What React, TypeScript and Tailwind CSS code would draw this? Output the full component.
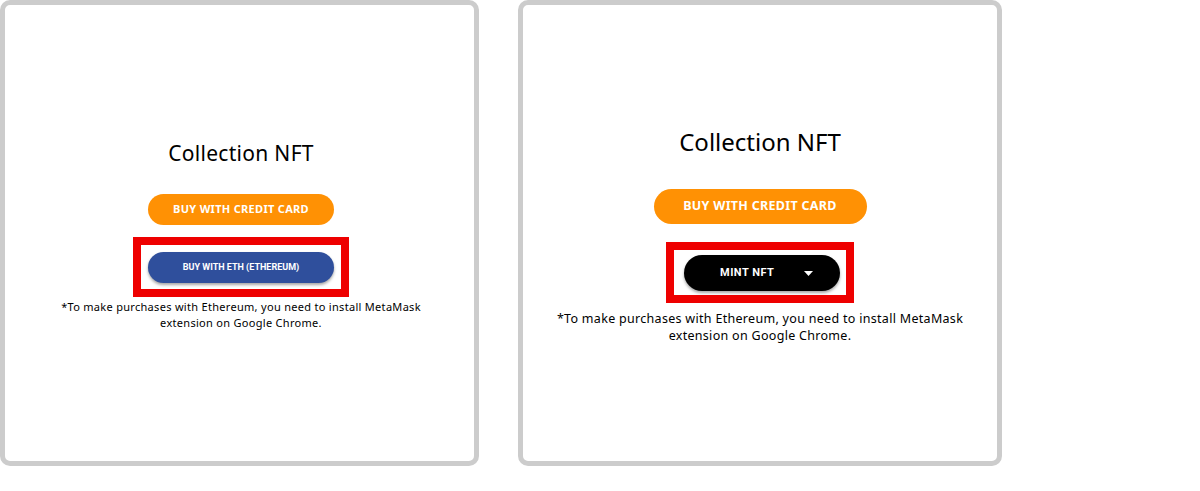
import React from 'react';

const sans = { fontFamily: '"Noto Sans", "Open Sans", sans-serif' };

function Footnote({ size }: { size: 'sm' | 'lg' }) {
  return (
    <p
      style={sans}
      className={
        size === 'sm'
          ? 'text-[11px] leading-[16px] tracking-[0.3px] text-black text-center'
          : 'text-[12.5px] leading-[17px] tracking-[0.3px] text-black text-center'
      }
    >
      *To make purchases with Ethereum, you need to install MetaMask
      <br />
      extension on Google Chrome.
    </p>
  );
}

export default function App() {
  return (
    <div className="w-[1200px] h-[491px] bg-white flex gap-[39px] items-start">
      {/* Left card: ETH button variant */}
      <div className="w-[479px] h-[466px] border-[5px] border-[#cccccc] rounded-[10px] flex flex-col items-center pt-[133px] pl-[3px]">
        <h2 style={sans} className="text-[21px] leading-[30px] tracking-[0.3px] text-black">
          Collection NFT
        </h2>
        <button
          style={sans}
          className="mt-[26px] w-[186px] h-[31px] rounded-full bg-[#ff9104] text-white text-[11px] font-bold tracking-[0.3px] flex items-center justify-center"
        >
          BUY WITH CREDIT CARD
        </button>
        <div className="mt-[12px] border-[8px] border-[#ee0000] pt-[7px] pb-[6px] px-[7px]">
          <button
            style={{ fontFamily: 'Roboto, sans-serif' }}
            className="w-[186px] h-[31px] rounded-full bg-[#2f4f9c] text-white text-[9px] font-bold flex items-center justify-center shadow-[0_2px_3px_rgba(0,0,0,0.35)]"
          >
            BUY WITH ETH (ETHEREUM)
          </button>
        </div>
        <div className="mt-[2px]">
          <Footnote size="sm" />
        </div>
      </div>

      {/* Right card: Mint NFT variant */}
      <div className="w-[484px] h-[466px] border-[5px] border-[#cccccc] rounded-[10px] flex flex-col items-center pt-[121px]">
        <h2 style={sans} className="text-[24px] leading-[32px] text-black">
          Collection NFT
        </h2>
        <button
          style={sans}
          className="mt-[31px] w-[213px] h-[35px] rounded-full bg-[#ff9104] text-white text-[12.5px] font-bold tracking-[0.3px] flex items-center justify-center"
        >
          BUY WITH CREDIT CARD
        </button>
        <div className="mt-[18px] border-[8px] border-[#ee0000] pt-[5px] pb-[4px] pl-[10px] pr-[6px]">
          <button
            style={{ fontFamily: 'Roboto, sans-serif' }}
            className="w-[156px] h-[36px] rounded-full bg-black text-white text-[11px] font-bold tracking-[0.5px] flex items-center pl-[36px] gap-[30px] shadow-[0_2px_3px_rgba(0,0,0,0.35)]"
          >
            <span>MINT NFT</span>
            <svg width="9" height="5" viewBox="0 0 9 5">
              <polygon points="0,0 9,0 4.5,5" fill="white" />
            </svg>
          </button>
        </div>
        <div className="mt-[7px]">
          <Footnote size="lg" />
        </div>
      </div>
    </div>
  );
}
